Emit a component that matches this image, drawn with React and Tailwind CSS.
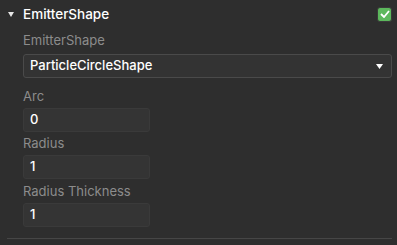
import React from "react";

const Field = ({ label, value, gap }) => (
  <div className={`flex flex-col ${gap}`}>
    <div className="h-[16px] text-[13px] leading-[16px] text-[#8c8c8c]">{label}</div>
    <div className="mt-[4px] flex h-[24px] w-[127px] items-center rounded-[3px] border border-[#3a3a3a] bg-[#343434] px-[6px] text-[13px] font-medium text-white">
      {value}
    </div>
  </div>
);

export default function App() {
  return (
    <div
      className="h-[245px] w-[397px] overflow-hidden bg-[#2e2e2e] pl-[7px] pr-[5px] pt-[6px]"
      style={{ fontFamily: "Inter, 'Liberation Sans', sans-serif" }}
    >
      {/* Header */}
      <div className="flex h-[16px] items-center">
        <svg width="6" height="5" viewBox="0 0 6 5" className="ml-[1px]">
          <path d="M0 0 H6 L3 5 Z" fill="#e6e6e6" />
        </svg>
        <span className="ml-[9px] text-[13.5px] font-medium leading-[16px] text-white">EmitterShape</span>
        <div className="ml-auto flex h-[15px] w-[15px] items-center justify-center rounded-[3px] border border-[#3a3a3a] bg-[#5cb85c]">
          <svg width="10" height="8" viewBox="0 0 10 8">
            <path d="M1 4 L4 7 L9 1" fill="none" stroke="white" strokeWidth="1.8" />
          </svg>
        </div>
      </div>

      <div className="pl-[16px]">
        <div className="mt-[10px] h-[16px] text-[13px] leading-[16px] text-[#8c8c8c]">EmitterShape</div>
        <div className="mt-[6px] flex h-[24px] items-center rounded-[3px] border border-[#4a4a4a] bg-[#333333] pl-[6px] pr-[8px] text-[13px] font-medium text-white">
          <span>ParticleCircleShape</span>
          <svg width="7" height="5" viewBox="0 0 7 5" className="ml-auto">
            <path d="M0 0 H7 L3.5 5 Z" fill="#ffffff" />
          </svg>
        </div>

        <Field gap="mt-[10px]" label="Arc" value="0" />
        <Field gap="mt-[3px]" label="Radius" value="1" />
        <Field gap="mt-[4px]" label="Radius Thickness" value="1" />
      </div>

      <div className="mt-[11px] h-px bg-[#464646]" />
    </div>
  );
}
